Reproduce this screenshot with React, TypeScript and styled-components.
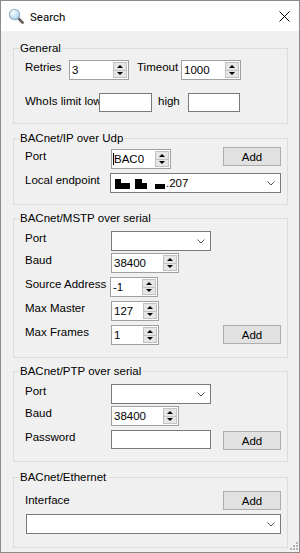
import React from "react";
import styled, { createGlobalStyle } from "styled-components";

const GlobalStyle = createGlobalStyle`
  html, body { margin: 0; padding: 0; }
  body {
    background: #fff;
    font-family: "Liberation Sans", Arial, sans-serif;
    font-size: 11.5px;
    color: #000;
  }
  * { box-sizing: border-box; }
`;

const Window = styled.div`
  position: relative;
  width: 300px;
  height: 553px;
  border: 1px solid #8c8c8c;
  background: #f0f0f0;
  display: flex;
  flex-direction: column;
  overflow: hidden;
`;

const TitleBar = styled.div`
  height: 30px;
  flex: none;
  background: #fff;
  display: flex;
  align-items: center;
  gap: 6px;
  padding: 0 9px 0 7px;
`;

const Title = styled.span`
  flex: 1;
  font-family: Roboto, "Liberation Sans", sans-serif;
  font-size: 11.5px;
  line-height: 16px;
  padding-top: 1px;
`;

const Body = styled.div`
  flex: 1;
  display: flex;
  flex-direction: column;
  padding: 10px 11px 0 12px;
`;

const Group = styled.fieldset<{ $h: number; $mt?: number }>`
  margin: ${(p) => p.$mt ?? 0}px 0 0;
  padding: 0;
  border: 1px solid #dcdcdc;
  height: ${(p) => p.$h}px;
  min-width: 0;
  flex: none;
`;

const Legend = styled.legend`
  margin-left: 5px;
  padding: 0 2px 0 1px;
  line-height: 14px;
  font-size: 11.5px;
`;

const Content = styled.div<{ $pt: number }>`
  display: flex;
  flex-direction: column;
  padding: ${(p) => p.$pt}px 6px 0 11px;
`;

const Row = styled.div<{ $h: number; $mt?: number }>`
  display: flex;
  align-items: flex-start;
  height: ${(p) => p.$h}px;
  margin-top: ${(p) => p.$mt ?? 0}px;
`;

const Label = styled.span<{ $w?: number; $ml?: number; $mt?: number }>`
  flex: none;
  width: ${(p) => (p.$w ? `${p.$w}px` : "auto")};
  margin-left: ${(p) => p.$ml ?? 0}px;
  margin-top: ${(p) => p.$mt ?? 0}px;
  line-height: 14px;
  white-space: nowrap;
  overflow: hidden;
`;

const SpinBox = styled.div<{ $w: number }>`
  flex: none;
  width: ${(p) => p.$w}px;
  height: 20px;
  border: 1px solid #a0a0a0;
  background: #fff;
  display: flex;
`;

const SpinValue = styled.span`
  flex: 1;
  padding-left: 2px;
  line-height: 18px;
  overflow: hidden;
  white-space: nowrap;
`;

const Caret = styled.span`
  border-left: 1px solid #000;
  margin-left: -1px;
`;

const SpinCol = styled.div`
  flex: none;
  width: 15px;
  display: flex;
  flex-direction: column;
  padding: 1px 1px 1px 0;
`;

const SpinBtn = styled.div<{ $down?: boolean }>`
  flex: 1;
  background: #e6e6e6;
  border: 1px solid #c2c2c2;
  margin-top: ${(p) => (p.$down ? "-1px" : "0")};
  display: flex;
  align-items: center;
  justify-content: center;
  &::after {
    content: "";
    border-left: 3px solid transparent;
    border-right: 3px solid transparent;
    ${(p) => (p.$down ? "border-top: 3px solid #000;" : "border-bottom: 3px solid #000;")}
  }
`;

const Combo = styled.div<{ $w?: number; $ml?: number }>`
  flex: ${(p) => (p.$w ? "none" : "1")};
  width: ${(p) => (p.$w ? `${p.$w}px` : "auto")};
  margin-left: ${(p) => p.$ml ?? 0}px;
  height: 20px;
  border: 1px solid #7a7a7a;
  background: #fff;
  display: flex;
  align-items: center;
  padding: 0 5px 0 4px;
`;

const ComboText = styled.span`
  flex: 1;
  display: flex;
  align-items: flex-end;
  line-height: 14px;
  white-space: nowrap;
`;

const Redacted = styled.svg`
  flex: none;
  margin-bottom: 1px;
  margin-right: 1px;
`;

const TextBox = styled.div<{ $w: number; $ml?: number }>`
  flex: none;
  width: ${(p) => p.$w}px;
  margin-left: ${(p) => p.$ml ?? 0}px;
  height: 19px;
  border: 1px solid #7a7a7a;
  background: #fff;
`;

const Button = styled.div<{ $mt?: number }>`
  flex: none;
  width: 58px;
  height: 19px;
  margin-left: auto;
  margin-top: ${(p) => p.$mt ?? 0}px;
  background: #e1e1e1;
  border: 1px solid #adadad;
  display: flex;
  align-items: center;
  justify-content: center;
  line-height: 14px;
`;

const Gripper = styled.svg`
  position: absolute;
  right: 1px;
  bottom: 2px;
`;

const Chevron = () => (
  <svg width="8" height="5" viewBox="0 0 8 5">
    <polyline points="0.5,0.5 4,4 7.5,0.5" fill="none" stroke="#555" strokeWidth="1" />
  </svg>
);

const Spinner: React.FC<{ w: number; value: string; caret?: boolean }> = ({ w, value, caret }) => (
  <SpinBox $w={w}>
    <SpinValue>
      {caret && <Caret />}
      {value}
    </SpinValue>
    <SpinCol>
      <SpinBtn />
      <SpinBtn $down />
    </SpinCol>
  </SpinBox>
);

const SearchIcon = () => (
  <svg width="16" height="16" viewBox="0 0 16 16">
    <defs>
      <radialGradient id="lens" cx="0.4" cy="0.35" r="0.7">
        <stop offset="0" stopColor="#f4fbff" />
        <stop offset="0.6" stopColor="#c4e2f8" />
        <stop offset="1" stopColor="#8fc0e6" />
      </radialGradient>
    </defs>
    <line x1="10.2" y1="10.2" x2="14.6" y2="14.6" stroke="#5a5a5a" strokeWidth="2.6" strokeLinecap="round" />
    <circle cx="6.5" cy="6.5" r="5.2" fill="url(#lens)" stroke="#9fb0bf" strokeWidth="1.1" />
    <path d="M3.6 6 A3 3 0 0 1 6 3.6" fill="none" stroke="#fff" strokeWidth="1" />
  </svg>
);

const CloseIcon = () => (
  <svg width="11" height="11" viewBox="0 0 11 11">
    <line x1="0.5" y1="0.5" x2="10.5" y2="10.5" stroke="#000" strokeWidth="1" />
    <line x1="10.5" y1="0.5" x2="0.5" y2="10.5" stroke="#000" strokeWidth="1" />
  </svg>
);

export default function App() {
  return (
    <>
      <GlobalStyle />
      <Window>
        <TitleBar>
          <SearchIcon />
          <Title>Search</Title>
          <CloseIcon />
        </TitleBar>
        <Body>
          <Group $h={83}>
            <Legend>General</Legend>
            <Content $pt={5}>
              <Row $h={20}>
                <Label $w={44}>Retries</Label>
                <Spinner w={60} value="3" />
                <Label $w={44} $ml={8}>Timeout</Label>
                <Spinner w={60} value="1000" />
              </Row>
              <Row $h={19} $mt={13}>
                <Label $w={74} $mt={1}>WhoIs limit low</Label>
                <TextBox $w={53} />
                <Label $w={30} $ml={6} $mt={1}>high</Label>
                <TextBox $w={52} />
              </Row>
            </Content>
          </Group>

          <Group $h={74} $mt={7}>
            <Legend>BACnet/IP over Udp</Legend>
            <Content $pt={4}>
              <Row $h={20}>
                <Label $w={86}>Port</Label>
                <Spinner w={60} value="BAC0" caret />
                <Button $mt={-2}>Add</Button>
              </Row>
              <Row $h={20} $mt={4}>
                <Label $w={85}>Local endpoint</Label>
                <Combo>
                  <ComboText>
                    <Redacted width="50" height="10" viewBox="0 0 50 10">
                      <rect x="0" y="0" width="6" height="10" fill="#000" />
                      <rect x="6" y="4" width="9" height="6" fill="#000" />
                      <rect x="20" y="0" width="7" height="10" fill="#000" />
                      <rect x="27" y="4" width="5" height="6" fill="#000" />
                      <rect x="40" y="5" width="10" height="5" fill="#000" />
                    </Redacted>
                    .207
                  </ComboText>
                  <Chevron />
                </Combo>
              </Row>
            </Content>
          </Group>

          <Group $h={147} $mt={6}>
            <Legend>BACnet/MSTP over serial</Legend>
            <Content $pt={6}>
              <Row $h={20}>
                <Label $w={86}>Port</Label>
                <Combo $w={100}>
                  <ComboText />
                  <Chevron />
                </Combo>
              </Row>
              <Row $h={20} $mt={2}>
                <Label $w={86}>Baud</Label>
                <Spinner w={68} value="38400" />
              </Row>
              <Row $h={20} $mt={4}>
                <Label $w={85}>Source Address</Label>
                <Spinner w={48} value="-1" />
              </Row>
              <Row $h={20} $mt={4}>
                <Label $w={86}>Max Master</Label>
                <Spinner w={48} value="127" />
              </Row>
              <Row $h={20} $mt={4}>
                <Label $w={86}>Max Frames</Label>
                <Spinner w={48} value="1" />
                <Button>Add</Button>
              </Row>
            </Content>
          </Group>

          <Group $h={98} $mt={6}>
            <Legend>BACnet/PTP over serial</Legend>
            <Content $pt={6}>
              <Row $h={20}>
                <Label $w={86}>Port</Label>
                <Combo $w={100}>
                  <ComboText />
                  <Chevron />
                </Combo>
              </Row>
              <Row $h={20} $mt={2}>
                <Label $w={86}>Baud</Label>
                <Spinner w={68} value="38400" />
              </Row>
              <Row $h={19} $mt={4}>
                <Label $w={86}>Password</Label>
                <TextBox $w={100} />
                <Button $mt={1}>Add</Button>
              </Row>
            </Content>
          </Group>

          <Group $h={78} $mt={8}>
            <Legend>BACnet/Ethernet</Legend>
            <Content $pt={7}>
              <Row $h={19}>
                <Label $mt={2}>Interface</Label>
                <Button>Add</Button>
              </Row>
              <Row $h={20} $mt={4}>
                <Combo $ml={1}>
                  <ComboText />
                  <Chevron />
                </Combo>
              </Row>
            </Content>
          </Group>
        </Body>
        <Gripper width="8" height="8" viewBox="0 0 8 8">
          <rect x="6" y="0" width="2" height="2" fill="#b4b4b4" />
          <rect x="3" y="3" width="2" height="2" fill="#b4b4b4" />
          <rect x="6" y="3" width="2" height="2" fill="#b4b4b4" />
          <rect x="0" y="6" width="2" height="2" fill="#b4b4b4" />
          <rect x="3" y="6" width="2" height="2" fill="#b4b4b4" />
          <rect x="6" y="6" width="2" height="2" fill="#b4b4b4" />
        </Gripper>
      </Window>
    </>
  );
}
